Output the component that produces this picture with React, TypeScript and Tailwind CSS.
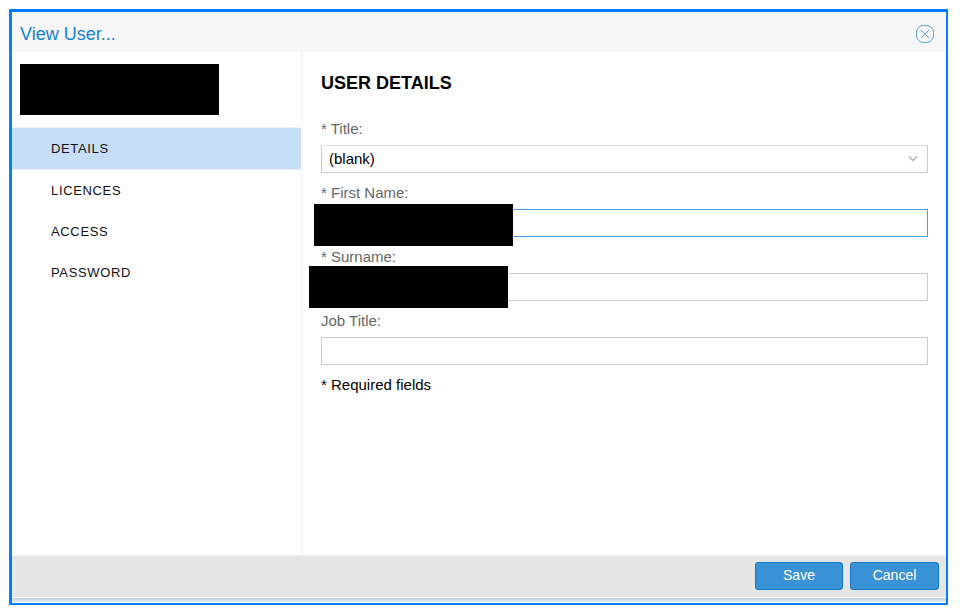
import React, { useState } from 'react';

const TABS = ['Details', 'Licences', 'Access', 'Password'];

const FIELD = 'block w-full h-7 px-[7px] bg-white border text-[15px] text-black outline-none';

interface FieldProps {
    id: string;
    label: string;
    children: React.ReactNode;
}

function Field({ id, label, children }: FieldProps) {
    return (
        <div>
            <label htmlFor={id} className="block mb-1.5 text-[15px] leading-5 text-[#666666]">
                {label}
            </label>
            <div className="relative">{children}</div>
        </div>
    );
}

export default function App() {
    const [activeTab, setActiveTab] = useState('Details');

    return (
        <div className="min-h-screen flex flex-col bg-white pt-[9px] pl-[9px] pr-3 pb-[11px] font-['Liberation_Sans',Arial,sans-serif]">
            <div
                role="dialog"
                aria-labelledby="dialog-title"
                className="flex-1 flex flex-col border-[#0080ff] border-t-3 border-l-3 border-r-2 border-b-2"
            >
                {/* Title bar */}
                <header className="h-10 flex items-center justify-between pl-2 pr-[11px] pt-1 bg-[#f7f7f7]">
                    <h1 id="dialog-title" className="text-lg text-[#1480d3]">View User...</h1>
                    <button type="button" aria-label="Close" className="text-[#4c9fdb]">
                        <svg width="20" height="20" viewBox="0 0 20 20" fill="none" stroke="currentColor">
                            <rect x="1.5" y="1.5" width="17" height="17" rx="7" />
                            <path d="M6 6l3.500 3.500h1L14 6M6 14l3.500-3.500h1L14 14" />
                        </svg>
                    </button>
                </header>

                <div className="flex-1 flex">
                    {/* Sidebar */}
                    <aside className="w-[291px] shrink-0 border-r-2 border-[#f7f7f7]">
                        <div className="w-[199px] h-[51px] ml-2 mt-3 mb-3 bg-black" />
                        <nav className="flex flex-col">
                            {TABS.map((tab) => (
                                <button
                                    key={tab}
                                    type="button"
                                    onClick={() => setActiveTab(tab)}
                                    className={`pl-[39px] text-left text-[13px] tracking-wider uppercase text-[#111111] ${
                                        tab === activeTab
                                            ? 'h-[43px] bg-[#c7def8] border-y border-[#eaf3fd]'
                                            : 'h-[41px]'
                                    }`}
                                >
                                    {tab}
                                </button>
                            ))}
                        </nav>
                    </aside>

                    {/* Form */}
                    <main className="flex-1 min-w-0 px-[18px] pt-[17px]">
                        <h2 className="mb-[22px] text-lg leading-7 font-bold text-black">USER DETAILS</h2>
                        <form className="flex flex-col gap-2.5">
                            <Field id="title" label="* Title:">
                                <select id="title" className={`${FIELD} appearance-none border-[#cccccc] border-t-[#dddddd]`}>
                                    <option>(blank)</option>
                                </select>
                                <svg
                                    className="absolute right-2.5 top-2.5 pointer-events-none"
                                    width="10"
                                    height="8"
                                    viewBox="0 0 10 8"
                                    fill="none"
                                    stroke="#b0b0b0"
                                    strokeWidth="1.5"
                                >
                                    <path d="M1 1.500l4 4 4-4" />
                                </svg>
                            </Field>
                            <Field id="first-name" label="* First Name:">
                                <input id="first-name" type="text" className={`${FIELD} border-[#4c9fdb]`} />
                                <div className="absolute -left-[7px] -top-[5px] w-[199px] h-[42px] bg-black" />
                            </Field>
                            <Field id="surname" label="* Surname:">
                                <input id="surname" type="text" className={`${FIELD} border-[#cccccc]`} />
                                <div className="absolute -left-3 -top-[7px] w-[199px] h-[42px] bg-black" />
                            </Field>
                            <Field id="job-title" label="Job Title:">
                                <input id="job-title" type="text" className={`${FIELD} border-[#cccccc]`} />
                            </Field>
                            <p className="text-[15px] leading-5 text-black">* Required fields</p>
                        </form>
                    </main>
                </div>

                {/* Actions */}
                <footer className="h-[43px] flex items-center justify-end gap-[7px] pr-[7px] pb-0.5 bg-[#e6e6e6] border-t border-[#efefef] border-b border-b-[#f7f7f7]">
                    <button type="button" className="w-[88px] h-7 pb-0.5 rounded-[3px] border border-[#0f78cd] bg-[#3a93d7] text-sm text-white">
                        Save
                    </button>
                    <button type="button" className="w-[89px] h-7 pb-0.5 rounded-[3px] border border-[#0f78cd] bg-[#3a93d7] text-sm text-white">
                        Cancel
                    </button>
                </footer>
                <div className="h-[5px] bg-[#d5e2ea] border-t-2 border-t-[#c5d6de] border-b border-b-white" />
            </div>
        </div>
    );
}
